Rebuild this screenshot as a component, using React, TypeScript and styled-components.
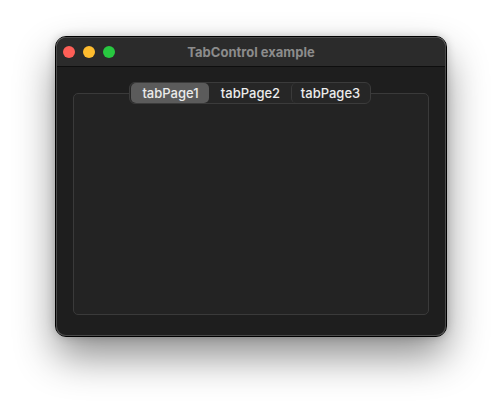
import React, { useState } from "react";
import styled, { createGlobalStyle } from "styled-components";

const Global = createGlobalStyle`
  html, body { margin: 0; padding: 0; background: #ffffff; }
  body { font-family: "Inter", "Liberation Sans", sans-serif; }
`;

const Page = styled.div`
  width: 502px;
  height: 410px;
  box-sizing: border-box;
  padding: 37px 0 0 56px;
`;

const Window = styled.div`
  width: 390px;
  height: 299px;
  box-sizing: border-box;
  border-radius: 10px;
  background: #1e1e1e;
  border: 1px solid #4a4a4a;
  outline: 1px solid #000;
  box-shadow: 0 20px 40px rgba(0, 0, 0, 0.45), 0 0 10px rgba(0, 0, 0, 0.25);
  display: flex;
  flex-direction: column;
  overflow: hidden;
`;

const TitleBar = styled.div`
  height: 28px;
  flex: none;
  display: grid;
  grid-template-columns: 80px 1fr 80px;
  align-items: center;
  background: #2b2b2b;
  border-bottom: 1px solid #0e0e0e;
`;

const Lights = styled.div`
  display: flex;
  gap: 8px;
  padding-left: 6px;
`;

const Light = styled.span<{ $c: string }>`
  width: 12px;
  height: 12px;
  border-radius: 50%;
  background: ${(p) => p.$c};
`;

const Title = styled.div`
  text-align: center;
  font-size: 13px;
  font-weight: 700;
  color: #8c8c8c;
`;

const Body = styled.div`
  flex: 1;
  padding: 15px 16px 20px 16px;
  display: flex;
  flex-direction: column;
`;

const TabWidget = styled.div`
  flex: 1;
  display: flex;
  flex-direction: column;
  align-items: center;
`;

const TabBar = styled.div`
  display: flex;
  align-items: center;
  height: 22px;
  box-sizing: border-box;
  padding: 1px;
  border: 1px solid #3b3b3b;
  border-radius: 6px;
  background: #262626;
  position: relative;
  z-index: 1;
  margin: 0 2px -11px 0;
`;

const Tab = styled.div<{ $active: boolean; $sep: boolean }>`
  width: 78px;
  height: 20px;
  box-sizing: border-box;
  display: flex;
  align-items: center;
  justify-content: center;
  font-size: 13px;
  font-weight: 500;
  color: #ececec;
  border-radius: 5px;
  background: ${(p) => (p.$active ? "#5b5b5b" : "transparent")};
  border-left: 1px solid ${(p) => (p.$sep ? "#3a3a3a" : "transparent")};
  cursor: default;
  & + & {
    margin-left: 2px;
  }
`;

const Pane = styled.div`
  align-self: stretch;
  flex: 1;
  border: 1px solid #3a3a3a;
  border-radius: 5px;
  background: #232323;
`;

export default function App() {
  const [active, setActive] = useState(0);
  const tabs = ["tabPage1", "tabPage2", "tabPage3"];
  return (
    <Page>
      <Global />
      <Window>
        <TitleBar>
          <Lights>
            <Light $c="#fe5f57" />
            <Light $c="#febc2e" />
            <Light $c="#28c840" />
          </Lights>
          <Title>TabControl example</Title>
          <div />
        </TitleBar>
        <Body>
          <TabWidget>
            <TabBar>
              {tabs.map((t, i) => (
                <Tab
                  key={t}
                  $active={i === active}
                  $sep={i > 0 && i !== active && i - 1 !== active}
                  onClick={() => setActive(i)}
                >
                  {t}
                </Tab>
              ))}
            </TabBar>
            <Pane />
          </TabWidget>
        </Body>
      </Window>
    </Page>
  );
}
